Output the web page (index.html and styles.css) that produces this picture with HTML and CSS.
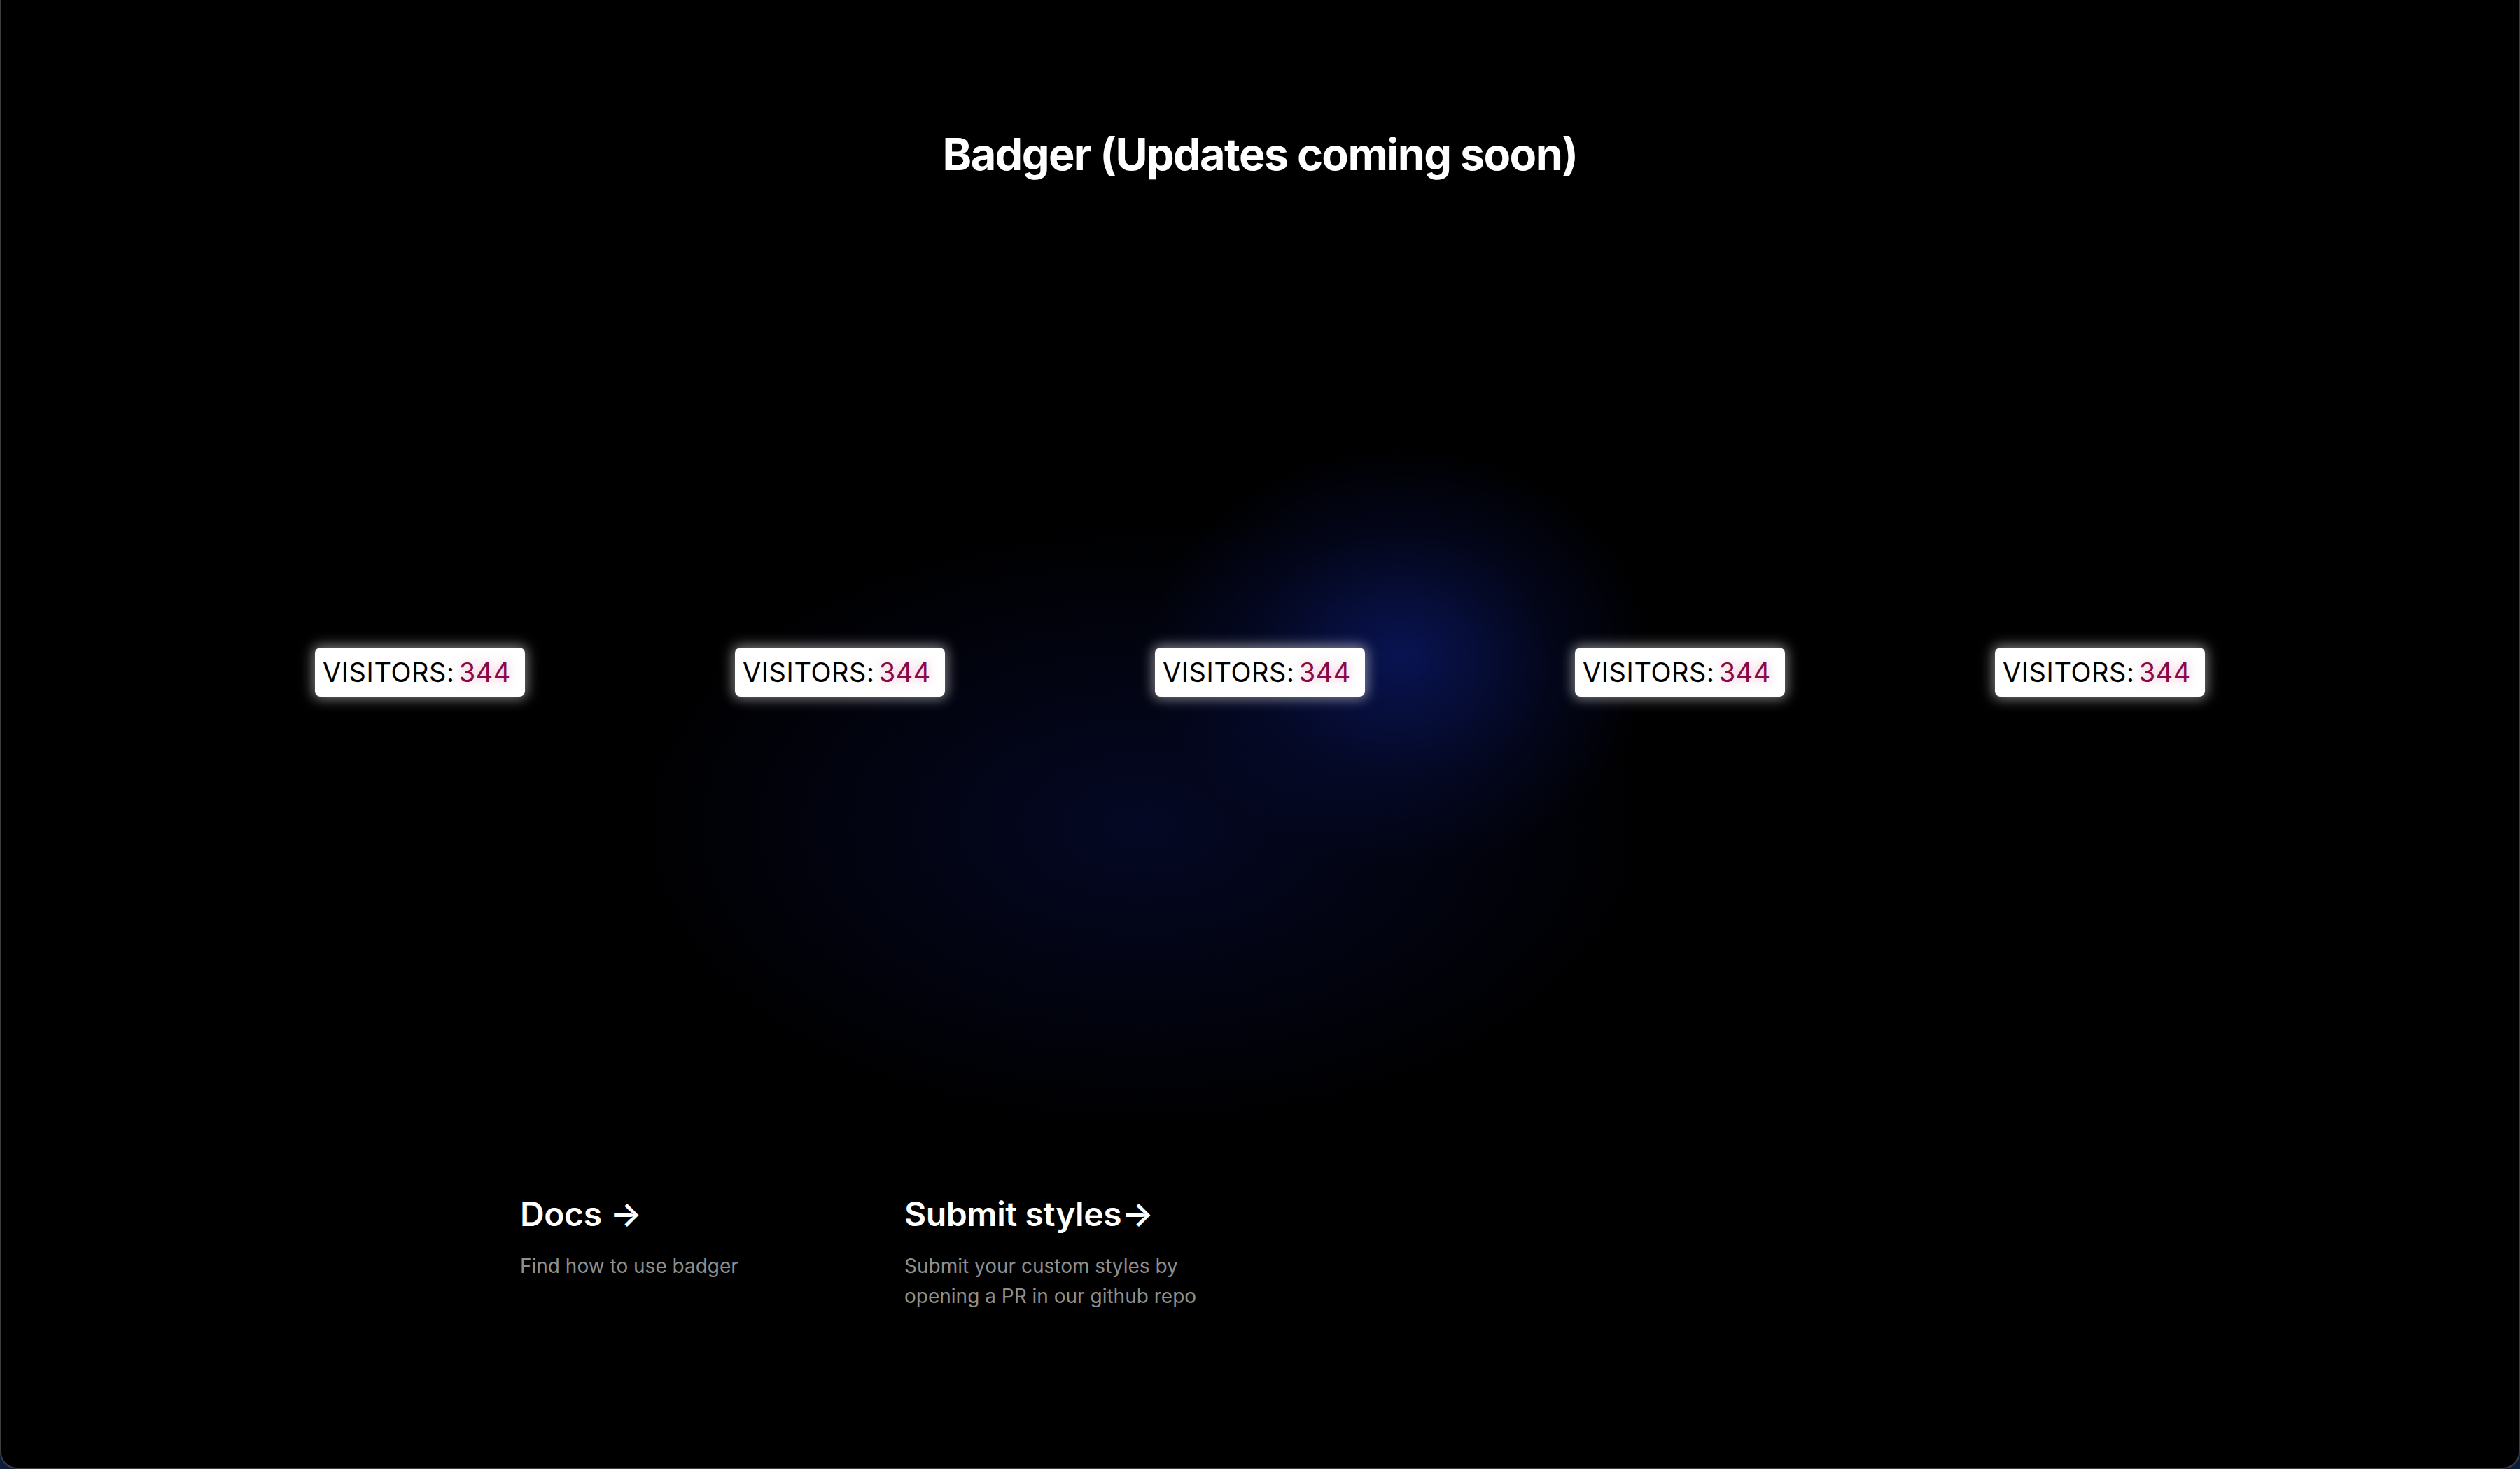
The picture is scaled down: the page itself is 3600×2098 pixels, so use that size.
FILE: index.html
```html
<!DOCTYPE html>
<html lang="en">
<head>
<meta charset="utf-8">
<title>Badger</title>
<link rel="stylesheet" href="styles.css">
</head>
<body>
<div class="frame">
  <h1 class="title">Badger (Updates coming soon)</h1>
  <div class="badges">
    <div class="cell"><div class="badge"><span class="label">VISITORS:</span><span class="count">344</span></div></div>
    <div class="cell"><div class="badge"><span class="label">VISITORS:</span><span class="count">344</span></div></div>
    <div class="cell"><div class="badge"><span class="label">VISITORS:</span><span class="count">344</span></div></div>
    <div class="cell"><div class="badge"><span class="label">VISITORS:</span><span class="count">344</span></div></div>
    <div class="cell"><div class="badge"><span class="label">VISITORS:</span><span class="count">344</span></div></div>
  </div>
  <div class="links">
    <a class="link" href="#">
      <h2 class="link-title">Docs →</h2>
      <p class="link-desc">Find how to use badger</p>
    </a>
    <a class="link" href="#">
      <h2 class="link-title">Submit styles→</h2>
      <p class="link-desc">Submit your custom styles by opening a PR in our github repo</p>
    </a>
  </div>
</div>
</body>
</html>
```
FILE: styles.css
```css
html, body {
  margin: 0;
  padding: 0;
}
body {
  background: #0b1c3c;
  font-family: Inter, "Liberation Sans", sans-serif;
}
.frame {
  box-sizing: border-box;
  height: 2098px;
  width: 3600px;
  border: 2px solid #3d3d3d;
  border-top: none;
  border-radius: 0 0 24px 24px;
  background-color: #000;
  background-image:
    radial-gradient(ellipse 360px 300px at 2000px 935px, rgba(11, 24, 100, 0.8), rgba(8, 16, 70, 0.35) 60%, rgba(0, 0, 0, 0) 100%),
    radial-gradient(ellipse 740px 440px at 1630px 1180px, rgba(8, 16, 72, 0.5), rgba(0, 0, 0, 0) 100%);
  padding-top: 189px;
  overflow: hidden;
}
.title {
  margin: 0;
  text-align: center;
  color: #fff;
  font-family: Inter, "Liberation Sans", sans-serif;
  font-weight: 700;
  font-size: 63px;
  line-height: 1;
  letter-spacing: -1.6px;
}
.badges {
  margin: 673px auto 0;
  width: 3000px;
  display: grid;
  grid-template-columns: repeat(5, 1fr);
}
.cell {
  display: flex;
  justify-content: center;
}
.badge {
  box-sizing: border-box;
  width: 300px;
  height: 70px;
  display: flex;
  align-items: center;
  padding: 0 21px 0 11px;
  background: #fff;
  border-radius: 8px;
  box-shadow: 0 0 18px 3px rgba(255, 255, 255, 0.5);
  font-family: Inter, "Liberation Sans", sans-serif;
  font-size: 38px;
  line-height: 1;
}
.label {
  color: #000;
  letter-spacing: 0.6px;
}
.count {
  margin-left: 6px;
  color: #860a48;
  letter-spacing: 0.5px;
  text-shadow: 0 0 14px rgba(220, 90, 140, 0.5);
}
.links {
  margin: 710px auto 0;
  width: 2114px;
  display: grid;
  grid-template-columns: repeat(4, 467px);
  column-gap: 82px;
}
.link {
  text-decoration: none;
  display: block;
}
.link-title {
  margin: 0;
  color: #fff;
  font-weight: 600;
  font-size: 48px;
  line-height: 1.2;
  letter-spacing: -0.4px;
}
.link-desc {
  margin: 24px 0 0;
  color: #8f8f8f;
  font-size: 28px;
  line-height: 43px;
}
```
